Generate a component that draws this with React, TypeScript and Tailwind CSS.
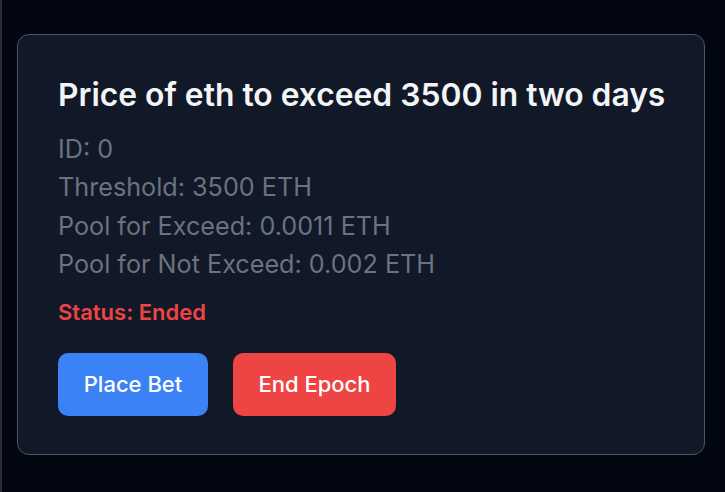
import React from "react";

export default function App() {
  return (
    <div
      className="w-[725px] h-[492px] bg-[#030712] border-l-2 border-[#2b2d33] overflow-hidden"
      style={{ fontFamily: "Inter, 'Noto Sans', sans-serif" }}
    >
      <div className="pt-[34px] pl-[15px] w-[703px]">
        <div className="h-[421px] rounded-[12px] border border-[#4b5563] bg-[#111827] pl-[40px] pt-[41px] flex flex-col">
          <h1 className="text-[31.8px] leading-[38px] font-semibold text-[#f3f4f6]">
            Price of eth to exceed 3500 in two days
          </h1>
          <div className="mt-[16px] flex flex-col text-[25.2px] leading-[38.3px] text-[#6b7280]">
            <p>ID: 0</p>
            <p>Threshold: 3500 ETH</p>
            <p>Pool for Exceed: 0.0011 ETH</p>
            <p>Pool for Not Exceed: 0.002 ETH</p>
          </div>
          <p className="mt-[15px] text-[22px] leading-[28px] font-semibold text-[#ef4444]">
            Status: Ended
          </p>
          <div className="mt-[27px] flex gap-[25px]">
            <button className="h-[63px] w-[150px] rounded-[10px] bg-[#3b82f6] text-white text-[22px] font-medium">
              Place Bet
            </button>
            <button className="h-[63px] w-[163px] rounded-[10px] bg-[#ef4444] text-white text-[22px] font-medium">
              End Epoch
            </button>
          </div>
        </div>
      </div>
    </div>
  );
}
